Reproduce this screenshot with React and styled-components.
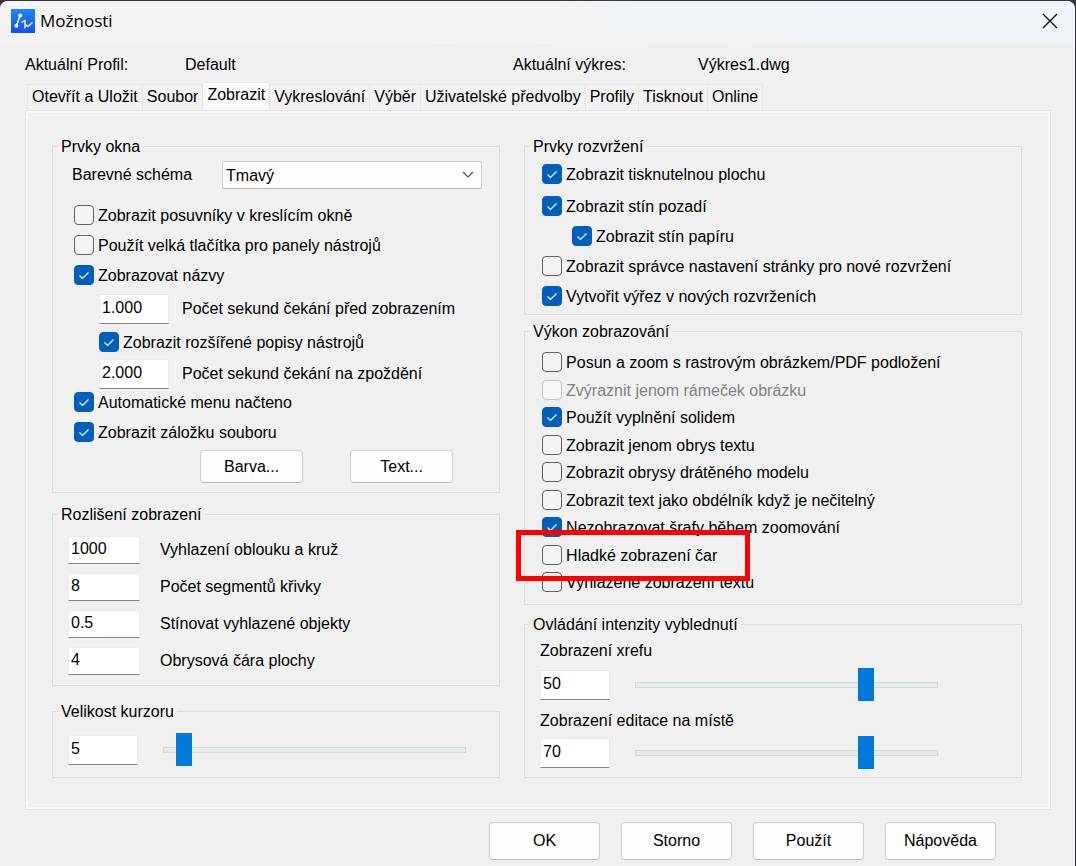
import React from 'react';
import styled, { createGlobalStyle, css } from 'styled-components';

const GlobalStyle = createGlobalStyle`
  *, *::before, *::after {
    box-sizing: border-box;
  }
  body {
    margin: 0;
    background: #343640;
    color: #000;
    font-family: "Liberation Sans", Arial, sans-serif;
    font-size: 16px;
    line-height: 20px;
  }
  input, select, button {
    margin: 0;
    color: inherit;
    font: inherit;
  }
`;

const tabs = [
  'Otevřít a Uložit',
  'Soubor',
  'Zobrazit',
  'Vykreslování',
  'Výběr',
  'Uživatelské předvolby',
  'Profily',
  'Tisknout',
  'Online',
];

const resolution = [
  { id: 'arc', value: '1000', label: 'Vyhlazení oblouku a kruž' },
  { id: 'segments', value: '8', label: 'Počet segmentů křivky' },
  { id: 'shade', value: '0.5', label: 'Stínovat vyhlazené objekty' },
  { id: 'contour', value: '4', label: 'Obrysová čára plochy' },
];

const performance = [
  { label: 'Posun a zoom s rastrovým obrázkem/PDF podložení' },
  { label: 'Zvýraznit jenom rámeček obrázku', disabled: true },
  { label: 'Použít vyplnění solidem', checked: true },
  { label: 'Zobrazit jenom obrys textu' },
  { label: 'Zobrazit obrysy drátěného modelu' },
  { label: 'Zobrazit text jako obdélník když je nečitelný' },
  { label: 'Nezobrazovat šrafy během zoomování', checked: true },
  { label: 'Hladké zobrazení čar', marked: true },
  { label: 'Vyhlazené zobrazení textu' },
];

const Check = ({ label, checked, disabled, marked, indent, gap }) => (
  <CheckLabel $disabled={disabled} $indent={indent} $gap={gap}>
    <CheckBox>
      <input type='checkbox' defaultChecked={checked} disabled={disabled} />
      <svg viewBox='0 0 20 20' aria-hidden='true'>
        <path d='M5.5 10.5 L8.5 13.5 L14.5 7.5' />
      </svg>
    </CheckBox>
    {label}
    {marked && <Marker />}
  </CheckLabel>
);

const Logo = () => (
  <svg width='24' height='24' viewBox='0 0 24 24' aria-hidden='true'>
    <defs>
      <linearGradient id='logo' x1='0' y1='0' x2='0' y2='1'>
        <stop offset='0' stopColor='#1e86f7' />
        <stop offset='1' stopColor='#1450ee' />
      </linearGradient>
    </defs>
    <rect width='24' height='24' fill='url(#logo)' />
    <g fill='none' stroke='#fff' strokeWidth='1.4'>
      <path d='M9 7 L5.5 16.5' />
      <path d='M10.5 13.5 L14 11.5 V19.5' />
      <path d='M15.5 15.5 Q15.5 18 17.5 17 L21.5 13.5' />
    </g>
    <circle cx='9.2' cy='6.5' r='2' fill='#fff' />
    <circle cx='5.4' cy='16.8' r='2' fill='#fff' />
  </svg>
);

const App = () => {
  return (
    <Window>
      <GlobalStyle />
      <TitleBar>
        <Logo />
        <Title>Možnosti</Title>
        <CloseButton type='button' aria-label='Zavřít'>
          <svg width='16' height='16' viewBox='0 0 16 16'>
            <path d='M1 1 L15 15 M15 1 L1 15' stroke='#111' strokeWidth='1.4' />
          </svg>
        </CloseButton>
      </TitleBar>

      <Content>
        <Info>
          <span>Aktuální Profil:</span>
          <span>Default</span>
          <span>Aktuální výkres:</span>
          <span>Výkres1.dwg</span>
        </Info>

        <Tabs role='tablist'>
          {tabs.map((tab) => (
            <Tab
              key={tab}
              type='button'
              role='tab'
              aria-selected={tab === 'Zobrazit'}
              $active={tab === 'Zobrazit'}
            >
              {tab}
            </Tab>
          ))}
        </Tabs>

        <Panel role='tabpanel'>
          <Column>
            <Group>
              <Legend>Prvky okna</Legend>
              <WindowBody>
                <Row>
                  <label htmlFor='scheme'>Barevné schéma</label>
                  <SelectWrapper>
                    <select id='scheme' defaultValue='Tmavý'>
                      <option>Tmavý</option>
                      <option>Světlý</option>
                    </select>
                    <svg width='12' height='8' viewBox='0 0 12 8'>
                      <path d='M1 1 L6 6 L11 1' fill='none' stroke='#555' strokeWidth='1.2' />
                    </svg>
                  </SelectWrapper>
                </Row>
                <Check label='Zobrazit posuvníky v kreslícím okně' gap={16} />
                <Check label='Použít velká tlačítka pro panely nástrojů' gap={10} />
                <Check label='Zobrazovat názvy' checked gap={10} />
                <Row $gap={9} $indent={27}>
                  <Field id='delay' defaultValue='1.000' />
                  <FieldLabel htmlFor='delay'>Počet sekund čekání před zobrazením</FieldLabel>
                </Row>
                <Check label='Zobrazit rozšířené popisy nástrojů' checked gap={8} indent={25} />
                <Row $gap={7} $indent={27}>
                  <Field id='delayExtended' defaultValue='2.000' />
                  <FieldLabel htmlFor='delayExtended'>Počet sekund čekání na zpoždění</FieldLabel>
                </Row>
                <Check label='Automatické menu načteno' checked gap={3} />
                <Check label='Zobrazit záložku souboru' checked gap={10} />
                <GroupButtons>
                  <Button type='button'>Barva...</Button>
                  <Button type='button'>Text...</Button>
                </GroupButtons>
              </WindowBody>
            </Group>

            <Group $space={11}>
              <Legend>Rozlišení zobrazení</Legend>
              <ResolutionBody>
                {resolution.map(({ id, value, label }) => (
                  <Row key={id}>
                    <Field id={id} defaultValue={value} $wide />
                    <FieldLabel htmlFor={id} $wide>
                      {label}
                    </FieldLabel>
                  </Row>
                ))}
              </ResolutionBody>
            </Group>

            <Group $space={15}>
              <Legend>Velikost kurzoru</Legend>
              <CursorBody>
                <Row>
                  <Field aria-label='Velikost kurzoru' defaultValue='5' />
                  <Slider aria-label='Velikost kurzoru' min='1' max='100' defaultValue='5' />
                </Row>
              </CursorBody>
            </Group>
          </Column>

          <Column>
            <Group>
              <Legend>Prvky rozvržení</Legend>
              <LayoutBody>
                <Check label='Zobrazit tisknutelnou plochu' checked />
                <Check label='Zobrazit stín pozadí' checked gap={12} />
                <Check label='Zobrazit stín papíru' checked gap={10} indent={30} />
                <Check label='Zobrazit správce nastavení stránky pro nové rozvržení' gap={10} />
                <Check label='Vytvořit výřez v nových rozvrženích' checked gap={10} />
              </LayoutBody>
            </Group>

            <Group $space={6}>
              <Legend>Výkon zobrazování</Legend>
              <PerformanceBody>
                {performance.map((item, i) => (
                  <Check key={item.label} {...item} gap={i === 0 ? 0 : i % 2 ? 8 : 7} />
                ))}
              </PerformanceBody>
            </Group>

            <Group $space={9}>
              <Legend>Ovládání intenzity vyblednutí</Legend>
              <FadeBody>
                <label htmlFor='xref'>Zobrazení xrefu</label>
                <Row $gap={7}>
                  <Field id='xref' defaultValue='50' />
                  <Slider aria-label='Zobrazení xrefu' min='0' max='90' defaultValue='70' />
                </Row>
                <EditLabel htmlFor='edit'>Zobrazení editace na místě</EditLabel>
                <Row $gap={5}>
                  <Field id='edit' defaultValue='70' />
                  <Slider aria-label='Zobrazení editace na místě' min='0' max='90' defaultValue='70' />
                </Row>
              </FadeBody>
            </Group>
          </Column>
        </Panel>

        <Footer>
          <Button type='button' $large>OK</Button>
          <Button type='button' $large>Storno</Button>
          <Button type='button' $large>Použít</Button>
          <Button type='button' $large>Nápověda</Button>
        </Footer>
      </Content>
    </Window>
  );
};

const Window = styled.div`
  min-height: calc(100vh - 1px);
  margin: 1px 1px 0 0;
  overflow: hidden;
  border-radius: 8px 8px 0 0;
  background: #f0f0f0;
`;

const TitleBar = styled.header`
  display: flex;
  align-items: center;
  height: 43px;
  padding: 0 17px 3px 11px;
  background: linear-gradient(90deg, #f3f3f3 30%, #eef3f7 80%);
`;

const Title = styled.h1`
  margin: 0 auto 0 5px;
  font-family: "Open Sans", "Noto Sans", sans-serif;
  font-size: 17px;
  font-weight: 400;
  line-height: 24px;
`;

const CloseButton = styled.button`
  display: flex;
  padding: 0;
  border: 0;
  background: none;
`;

const Content = styled.main`
  padding: 11px 24px 4px 25px;
`;

const Info = styled.div`
  display: grid;
  grid-template-columns: 160px 328px 185px 1fr;
`;

const Tabs = styled.div`
  display: flex;
  align-items: flex-end;
  height: 28px;
  margin-top: 7px;
  padding-left: 2px;
`;

const Tab = styled.button`
  height: 26px;
  padding: 0 4px 2px;
  border: 1px solid #e6e6e6;
  border-width: 1px 1px 0 0;
  background: #f2f2f2;
  white-space: nowrap;

  &:first-child {
    border-left-width: 1px;
  }

  ${({ $active }) =>
    $active &&
    css`
      height: 28px;
      padding-bottom: 4px;
      background: #f9f9f9;
    `}
`;

const Panel = styled.section`
  display: grid;
  grid-template-columns: 9fr 10fr;
  gap: 24px;
  padding: 25px 28px 31px 26px;
  border: 1px solid #e3e3e3;
  outline: 2px solid #f9f9f9;
  outline-offset: -3px;
`;

const Column = styled.div`
  min-width: 0;
`;

const Group = styled.fieldset`
  min-width: 0;
  margin: ${({ $space = 0 }) => $space}px 0 0;
  padding: 0;
  border: 1px solid #dcdcdc;
`;

const Legend = styled.legend`
  height: 20px;
  margin-left: 5px;
  padding: 0 3px;
  line-height: 22px;
`;

const Body = styled.div`
  display: flex;
  flex-direction: column;
`;

const WindowBody = styled(Body)`
  padding: 5px 17px 9px 19px;
`;

const ResolutionBody = styled(Body)`
  gap: 9px;
  padding: 12px 15px 10px;
`;

const CursorBody = styled(Body)`
  padding: 12px 15px 11px;
`;

const LayoutBody = styled(Body)`
  padding: 8px 15px;
`;

const PerformanceBody = styled(Body)`
  padding: 11px 15px 12px;
`;

const FadeBody = styled(Body)`
  padding: 7px 15px 8px;
`;

const Row = styled.div`
  display: flex;
  align-items: center;
  margin-top: ${({ $gap = 0 }) => $gap}px;
  padding-left: ${({ $indent = 0 }) => $indent}px;
`;

const EditLabel = styled.label`
  margin-top: 10px;
`;

const CheckLabel = styled.label`
  position: relative;
  display: flex;
  align-items: flex-start;
  align-self: flex-start;
  gap: 4px;
  height: 20px;
  margin-top: ${({ $gap = 0 }) => $gap}px;
  margin-left: ${({ $indent = 0 }) => $indent}px;
  padding-left: 2px;
  color: ${({ $disabled }) => ($disabled ? '#838383' : 'inherit')};
  line-height: 22px;
  white-space: nowrap;
`;

const CheckBox = styled.span`
  display: grid;
  width: 20px;
  height: 20px;

  input,
  svg {
    grid-area: 1 / 1;
    width: 20px;
    height: 20px;
  }

  input {
    appearance: none;
    border: 1px solid #626262;
    border-radius: 4px;
    background: #f3f3f3;
  }

  input:checked {
    border-color: #005fb8;
    background: #005fb8;
  }

  input:disabled {
    border-color: #c3c3c3;
    background: #f7f7f7;
  }

  svg {
    fill: none;
    stroke: #fff;
    stroke-width: 1.1;
    visibility: hidden;
    pointer-events: none;
  }

  input:checked + svg {
    visibility: visible;
  }
`;

/* red frame laid over the highlighted option and its neighbours */
const Marker = styled.span`
  position: absolute;
  z-index: 1;
  top: -15px;
  left: -24px;
  width: 234px;
  height: 51px;
  border: 5px solid #fe0000;
  pointer-events: none;
`;

const SelectWrapper = styled.div`
  display: grid;
  align-items: center;
  flex: 0 1 260px;
  margin-left: auto;

  select {
    grid-area: 1 / 1;
    width: 100%;
    height: 28px;
    padding: 1px 3px 0;
    appearance: none;
    border: 1px solid #d0d0d0;
    border-bottom-color: #b9b9b9;
    border-radius: 2px;
    background: #fdfdfd;
  }

  svg {
    grid-area: 1 / 1;
    justify-self: end;
    margin-right: 8px;
    pointer-events: none;
  }
`;

const Field = styled.input.attrs({ type: 'text' })`
  flex: none;
  width: ${({ $wide }) => ($wide ? 72 : 70)}px;
  height: ${({ $wide }) => ($wide ? 28 : 30)}px;
  padding: 0 2px 2px;
  border: 1px solid #ebebeb;
  border-bottom-color: #868686;
  background: #fff;
`;

const FieldLabel = styled.label`
  margin-left: ${({ $wide }) => ($wide ? 20 : 13)}px;
`;

const Slider = styled.input.attrs({ type: 'range' })`
  flex: 0 1 303px;
  min-width: 0;
  height: 33px;
  margin-left: 25px;
  appearance: none;
  background: none;

  &::-webkit-slider-runnable-track {
    height: 6px;
    border: 1px solid #d5d7d7;
    background: #e7eaea;
  }

  &::-webkit-slider-thumb {
    width: 16px;
    height: 33px;
    margin-top: -15px;
    appearance: none;
    background: #0078d9;
  }
`;

const Button = styled.button`
  width: ${({ $large }) => ($large ? 111 : 103)}px;
  height: ${({ $large }) => ($large ? 38 : 33)}px;
  padding: 0;
  border: 1px solid #d0d0d0;
  border-bottom-color: #bcbcbc;
  border-radius: 4px;
  background: #fdfdfd;
`;

const GroupButtons = styled.div`
  display: flex;
  justify-content: flex-end;
  gap: 47px;
  margin-top: 8px;
  padding-right: 29px;
`;

const Footer = styled.footer`
  display: flex;
  justify-content: flex-end;
  gap: 21px;
  margin-top: 12px;
  padding-right: 55px;
`;

export default App;
